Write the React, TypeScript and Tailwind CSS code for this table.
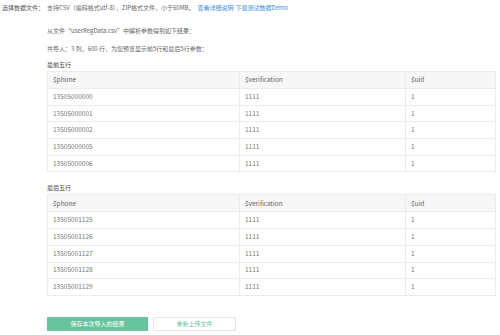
const firstRows = ['13505000000', '13505000001', '13505000002', '13505000005', '13505000006'];
const lastRows = ['13505001125', '13505001126', '13505001127', '13505001128', '13505001129'];

const PreviewTable = ({ phones }: { phones: string[] }) => (
  <table className="w-[449px] table-fixed border-collapse border border-[#ececec] text-[6.5px] text-[#777]">
    <colgroup>
      <col className="w-[192px]" />
      <col className="w-[166px]" />
      <col />
    </colgroup>
    <thead>
      <tr className="h-[17px] bg-[#f7f7f7] text-[#666]">
        <th className="border-r border-[#ececec] pl-[5px] text-left font-normal">$phone</th>
        <th className="border-r border-[#ececec] pl-[5px] text-left font-normal">$verification</th>
        <th className="pl-[5px] text-left font-normal">$uid</th>
      </tr>
    </thead>
    <tbody>
      {phones.map((p) => (
        <tr key={p} className="h-[16.7px] border-t border-[#ececec]">
          <td className="border-r border-[#ececec] pl-[5px]">{p}</td>
          <td className="border-r border-[#ececec] pl-[5px]">1111</td>
          <td className="pl-[5px]">1</td>
        </tr>
      ))}
    </tbody>
  </table>
);

const App = () => {
  return (
    <div
      className="w-[500px] h-[335px] bg-white text-[6px] text-[#666] overflow-hidden"
      style={{ fontFamily: '"Noto Sans CJK SC", "Noto Sans", sans-serif' }}
    >
      <div className="flex h-[14px] items-center">
        <div className="w-[47px] pl-[2px] text-[#555]">选择数据文件：</div>
        <div className="flex items-center">
          <span>支持CSV（编码格式utf-8），ZIP格式文件，小于60MB。</span>
          <span className="ml-[3px] text-[#3b8fd9]">查看详细说明</span>
          <span className="ml-[2px] text-[#3b8fd9]">下载测试数据Demo</span>
        </div>
      </div>

      <div className="pl-[47px]">
        <div className="mt-[9px] flex h-[14px] items-center">从文件“userRegData.csv”中解析参数得到如下结果：</div>
        <div className="mt-[4px] flex h-[14px] items-center">共导入：3 列，600 行，为您预览显示前5行和最后5行参数：</div>

        <div className="mt-[3px] flex h-[12px] items-center text-[#444]">最前五行</div>
        <div className="mt-[1px]">
          <PreviewTable phones={firstRows} />
        </div>

        <div className="mt-[9px] flex h-[12px] items-center text-[#444]">最后五行</div>
        <div className="mt-[1px]">
          <PreviewTable phones={lastRows} />
        </div>

        <div className="mt-[21px] flex gap-[5px]">
          <button className="h-[14px] w-[101px] bg-[#68c39f] text-white text-[6px]">保存本次导入的结果</button>
          <button className="h-[14px] w-[83px] border border-[#e6e6e6] bg-white text-[#68c39f] text-[6px]">重新上传文件</button>
        </div>
      </div>
    </div>
  );
};

export default App;
